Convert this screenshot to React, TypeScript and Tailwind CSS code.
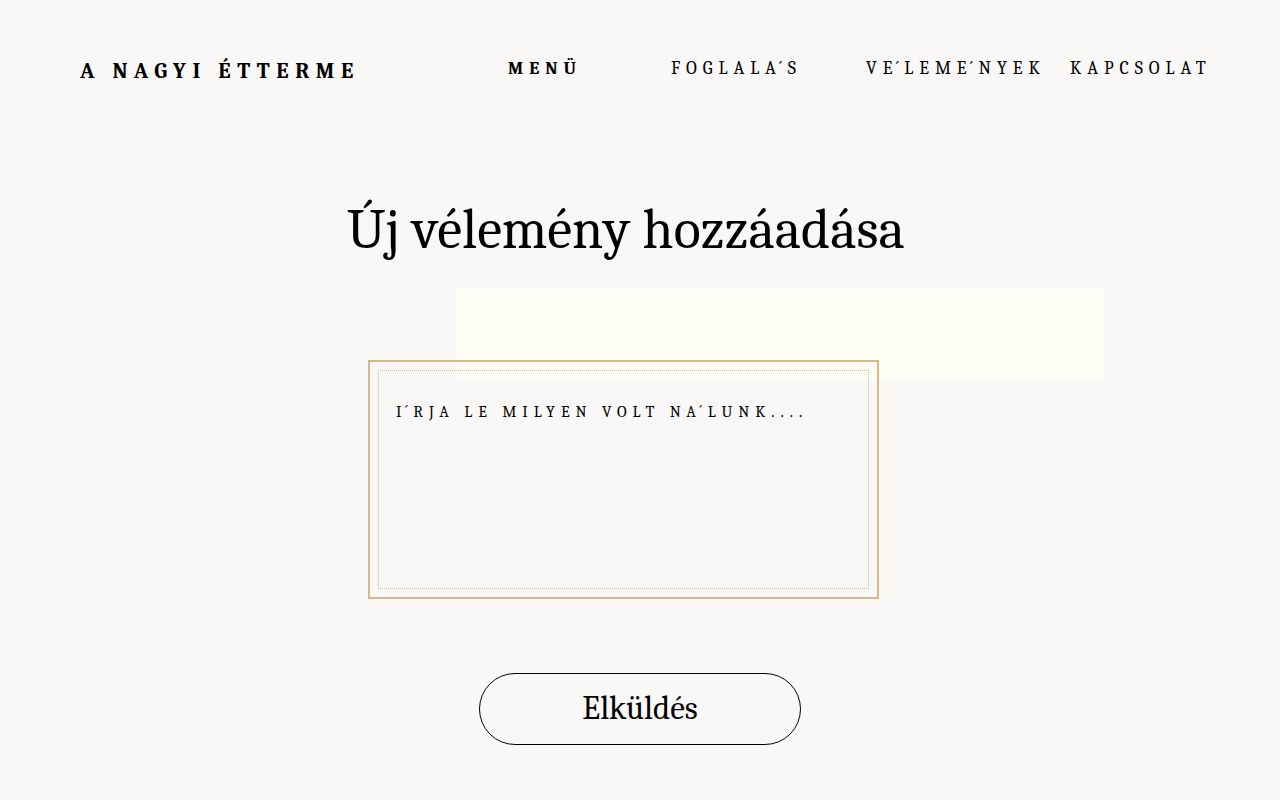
import { Fragment } from "react";

const serif = "font-['Caladea','Noto_Serif','DejaVu_Serif',serif]";

// the page spells accents as a letter plus a combining mark, which the letter-spacing pulls apart
function Spaced({ text }: { text: string }) {
  const parts = text.split("\u0301");
  return (
    <>
      {parts.map((part, i) => (
        <Fragment key={i}>
          {part}
          {i < parts.length - 1 && <span className="inline-block">{"\u0301"}</span>}
        </Fragment>
      ))}
    </>
  );
}

const navItems = [
  { label: "MENÜ", width: "w-[163px]", bold: true },
  { label: "FOGLALA\u0301S", width: "w-[195px]", bold: false },
  { label: "VE\u0301LEME\u0301NYEK", width: "w-[204px]", bold: false },
  { label: "KAPCSOLAT", width: "", bold: false },
];

export default function App() {
  return (
    <div className={`min-h-[800px] bg-[#f9f8f6] text-black ${serif}`}>
      <header className="flex items-start pl-20 pt-[52px]">
        <a className="mt-[3px] w-[428px] text-[22px] leading-[33px] font-bold tracking-[0.3em]">A NAGYI ÉTTERME</a>
        <nav className="mt-[3px] flex">
          {navItems.map((item) => (
            <a
              key={item.label}
              className={`${item.width} text-[18px] leading-[27px] tracking-[0.33em] ${item.bold ? "font-bold" : ""}`}
            >
              <Spaced text={item.label} />
            </a>
          ))}
        </nav>
      </header>

      <main className="flex flex-col">
        <h1 className="ml-[347px] mt-[114px] text-[56px] leading-none">Új vélemény hozzáadása</h1>

        <div className="ml-[456px] mt-[30px] h-[92px] w-[648px] bg-[#fdfdf5]" />

        <div className="-mt-[20px] ml-[368px] w-[511px] border-2 border-[#d6b88f] p-2">
          <div className="h-[219px] border border-dotted border-[#d6b88f] px-[17px] pt-[30px]">
            <p className="text-[16px] leading-[22px] tracking-[0.37em]">
              <Spaced text={"I\u0301RJA LE MILYEN VOLT NA\u0301LUNK...."} />
            </p>
          </div>
        </div>

        <button className="ml-[479px] mt-[74px] h-[72px] w-[322px] rounded-full border border-black text-[33px]">
          Elküldés
        </button>
      </main>
    </div>
  );
}
